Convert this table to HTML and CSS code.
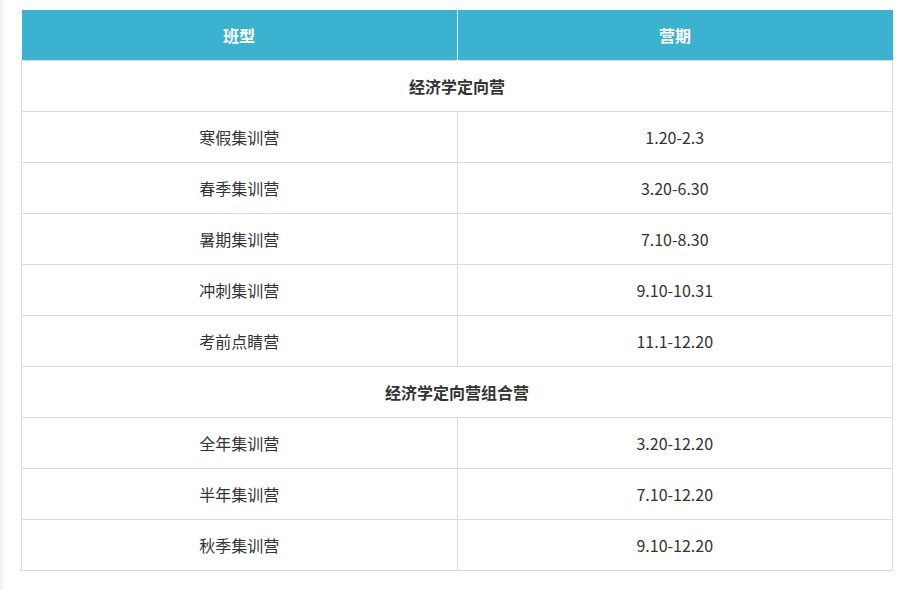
FILE: index.html
```html
<!DOCTYPE html>
<html lang="zh">
<head>
<meta charset="utf-8">
<title>营期</title>
<link rel="stylesheet" href="styles.css">
</head>
<body>
<div class="page">
<table class="camp">
  <thead>
    <tr><th>班型</th><th>营期</th></tr>
  </thead>
  <tbody>
    <tr class="group"><td colspan="2">经济学定向营</td></tr>
    <tr><td>寒假集训营</td><td>1.20-2.3</td></tr>
    <tr><td>春季集训营</td><td>3.20-6.30</td></tr>
    <tr><td>暑期集训营</td><td>7.10-8.30</td></tr>
    <tr><td>冲刺集训营</td><td>9.10-10.31</td></tr>
    <tr><td>考前点睛营</td><td>11.1-12.20</td></tr>
    <tr class="group"><td colspan="2">经济学定向营组合营</td></tr>
    <tr><td>全年集训营</td><td>3.20-12.20</td></tr>
    <tr><td>半年集训营</td><td>7.10-12.20</td></tr>
    <tr><td>秋季集训营</td><td>9.10-12.20</td></tr>
  </tbody>
</table>
</div>
</body>
</html>
```

FILE: styles.css
```css
html, body {
  margin: 0;
  padding: 0;
  background: #fff;
}
body {
  font-family: "Noto Sans CJK SC", "Open Sans", sans-serif;
  color: #333;
}
.page {
  width: 912px;
  height: 590px;
  box-sizing: border-box;
  padding: 10px 0 0 18px;
  border-left: 3px solid #f4f4f4;
}
.camp {
  width: 872px;
  border-collapse: collapse;
  table-layout: fixed;
  font-size: 16px;
}
.camp th {
  background: #3bb2d0;
  color: #fff;
  font-weight: bold;
  height: 50px;
  padding: 0;
  text-align: center;
  border-right: 1px solid #fff;
}
.camp th:last-child {
  border-right: none;
}
.camp th:first-child {
  width: 435px;
}
.camp td {
  height: 50px;
  padding: 0;
  text-align: center;
  border: 1px solid #dcdcdc;
  line-height: 20px;
}
.camp .group td {
  font-weight: bold;
}
```
